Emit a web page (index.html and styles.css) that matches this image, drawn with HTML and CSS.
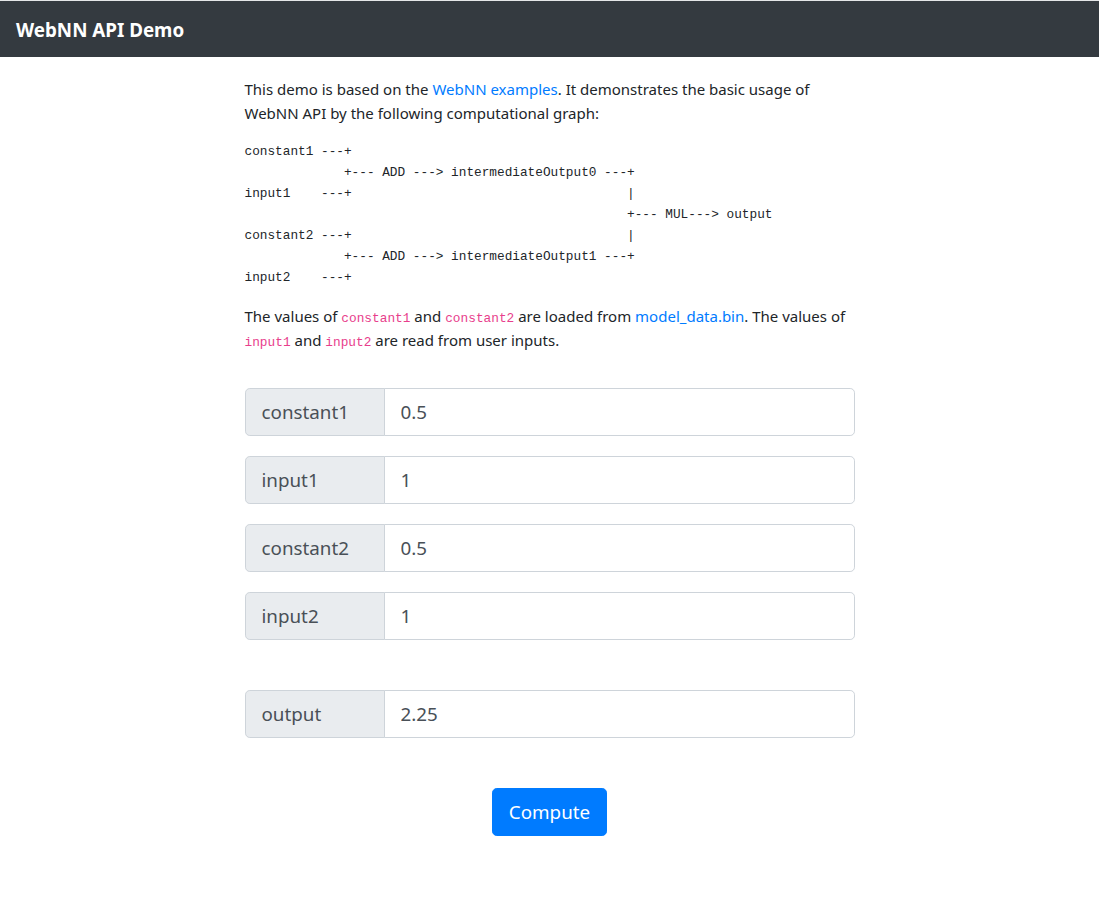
FILE: index.html
```html
<!DOCTYPE html>
<html lang="en">
<head>
<meta charset="utf-8">
<title>WebNN API Demo</title>
<link rel="stylesheet" href="styles.css">
</head>
<body>
<nav class="navbar">
  <span class="brand">WebNN API Demo</span>
</nav>
<main class="container">
  <p>This demo is based on the <a href="#">WebNN examples</a>. It demonstrates the basic usage of WebNN API by the following computational graph:</p>
<pre>constant1 ---+
             +--- ADD ---> intermediateOutput0 ---+
input1    ---+                                    |
                                                  +--- MUL---> output
constant2 ---+                                    |
             +--- ADD ---> intermediateOutput1 ---+
input2    ---+</pre>
  <p>The values of <code>constant1</code> and <code>constant2</code> are loaded from <a href="#">model_data.bin</a>. The values of <code>input1</code> and <code>input2</code> are read from user inputs.</p>

  <div class="fields">
    <div class="input-group"><span class="label">constant1</span><input class="field" type="text" value="0.5"></div>
    <div class="input-group"><span class="label">input1</span><input class="field" type="text" value="1"></div>
    <div class="input-group"><span class="label">constant2</span><input class="field" type="text" value="0.5"></div>
    <div class="input-group"><span class="label">input2</span><input class="field" type="text" value="1"></div>
    <div class="input-group output-group"><span class="label">output</span><input class="field" type="text" value="2.25"></div>
  </div>
  <div class="actions">
    <button class="btn" type="button">Compute</button>
  </div>
</main>
</body>
</html>
```

FILE: styles.css
```css
html, body {
  margin: 0;
  padding: 0;
}
body {
  font-family: "Noto Sans", "Open Sans", sans-serif;
  font-size: 15px;
  line-height: 24px;
  color: #212529;
  background: #fff;
  border-top: 1px solid #e4e6e8;
}
.navbar {
  background: #343a40;
  height: 56px;
  display: flex;
  align-items: center;
  padding: 0 16px;
}
.brand {
  color: #fff;
  font-weight: 700;
  font-size: 18.8px;
  line-height: 30px;
  padding-top: 2px;
}
.container {
  width: 610px;
  margin: 0 auto;
  padding-top: 20px;
}
p {
  margin: 0 0 16px;
}
a {
  color: #007bff;
  text-decoration: none;
}
pre {
  margin: 0 0 16px;
  font-family: "Liberation Mono", "DejaVu Sans Mono", monospace;
  font-size: 12.75px;
  line-height: 21px;
  color: #212529;
}
code {
  font-family: "Liberation Mono", "DejaVu Sans Mono", monospace;
  font-size: 12.8px;
  line-height: 1;
  color: #e83e8c;
}
.fields {
  display: flex;
  flex-direction: column;
  gap: 20px;
  padding-top: 20px;
}
.input-group {
  display: flex;
  height: 48px;
}
.output-group {
  margin-top: 30px;
}
.label {
  box-sizing: border-box;
  width: 140px;
  flex: none;
  display: flex;
  align-items: center;
  padding: 0 16px;
  font-size: 18.8px;
  color: #495057;
  background: #e9ecef;
  border: 1px solid #ced4da;
  border-radius: 4.8px 0 0 4.8px;
}
.field {
  box-sizing: border-box;
  flex: 1;
  min-width: 0;
  margin: 0 0 0 -1px;
  padding: 0 16px;
  font-family: inherit;
  font-size: 18.8px;
  color: #495057;
  background: #fff;
  border: 1px solid #ced4da;
  border-radius: 0 4.8px 4.8px 0;
  outline: none;
}
.actions {
  display: flex;
  justify-content: center;
  padding-top: 50px;
}
.btn {
  height: 48px;
  padding: 0 16px;
  font-family: inherit;
  font-size: 18.8px;
  color: #fff;
  background: #007bff;
  border: 1px solid #007bff;
  border-radius: 4.8px;
  cursor: pointer;
}
```
